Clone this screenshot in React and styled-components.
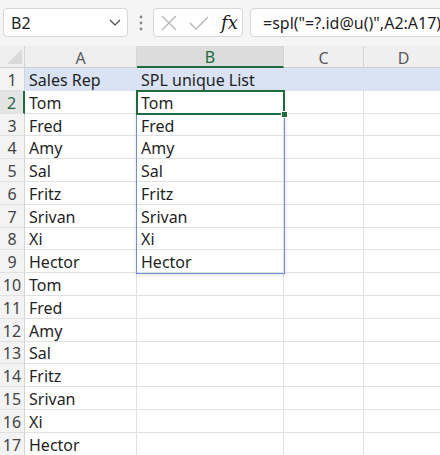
import React from 'react'
import styled, { createGlobalStyle } from 'styled-components'

const GlobalStyle = createGlobalStyle`
    html, body {
        margin: 0;
        padding: 0;
        background: #ffffff;
        overflow: hidden;
    }
    body {
        font-family: 'Noto Sans', 'Noto Sans CJK SC', sans-serif;
    }
`;

const ROW_H = 22.8;
const COLS = ['A', 'B', 'C', 'D'];
const colA = ['Sales Rep', 'Tom', 'Fred', 'Amy', 'Sal', 'Fritz', 'Srivan', 'Xi', 'Hector', 'Tom', 'Fred', 'Amy', 'Sal', 'Fritz', 'Srivan', 'Xi', 'Hector'];
const colB = ['SPL unique List', 'Tom', 'Fred', 'Amy', 'Sal', 'Fritz', 'Srivan', 'Xi', 'Hector'];

const Dots = () => (
    <DotsWrap>
        <svg width="4" height="16" viewBox="0 0 4 16">
            <circle cx="2" cy="2" r="1.4" fill="#8a8a8a" />
            <circle cx="2" cy="8" r="1.4" fill="#8a8a8a" />
            <circle cx="2" cy="14" r="1.4" fill="#8a8a8a" />
        </svg>
    </DotsWrap>
)

export default function App() {
    return (
        <>
            <GlobalStyle />
            <Page>
                <Toolbar>
                    <NameBox>
                        <NameText>B2</NameText>
                        <svg width="12" height="7" viewBox="0 0 12 7">
                            <path d="M1 1 L6 6 L11 1" fill="none" stroke="#444" strokeWidth="1.2" />
                        </svg>
                    </NameBox>
                    <Dots />
                    <FxBox>
                        <svg width="16" height="16" viewBox="0 0 16 16">
                            <path d="M1 1 L15 15 M15 1 L1 15" stroke="#b4b4b4" strokeWidth="1.3" fill="none" />
                        </svg>
                        <svg width="20" height="14" viewBox="0 0 20 14">
                            <path d="M1 7 L7 13 L19 1" stroke="#b4b4b4" strokeWidth="1.3" fill="none" />
                        </svg>
                        <FxText>fx</FxText>
                    </FxBox>
                    <FormulaBox>=spl("=?.id@u()",A2:A17)</FormulaBox>
                </Toolbar>

                <Sheet>
                    <Corner>
                        <svg width="15" height="15" viewBox="0 0 15 15">
                            <path d="M15 0 L15 15 L0 15 Z" fill="#dadada" />
                        </svg>
                    </Corner>
                    {COLS.map(c => (
                        <ColHead key={c} active={c === 'B'}>{c}</ColHead>
                    ))}

                    {colA.map((a, i) => (
                        <React.Fragment key={i}>
                            <RowHead active={i === 1}>{i + 1}</RowHead>
                            <Cell fill={i === 0}>{a}</Cell>
                            <Cell fill={i === 0}>{colB[i] || ''}</Cell>
                            <Cell fill={i === 0} />
                            <Cell fill={i === 0} />
                        </React.Fragment>
                    ))}

                    <SpillRange />
                    <ActiveCell>
                        <FillHandle />
                    </ActiveCell>
                </Sheet>
            </Page>
        </>
    )
}

const Page = styled.div`
    width: 440px;
    height: 455px;
    overflow: hidden;
    background: #ffffff;
`;
const Toolbar = styled.div`
    height: 46px;
    box-sizing: border-box;
    background: #f5f5f5;
    display: flex;
    align-items: center;
    padding: 0 0 1px 3px;
    overflow: hidden;
    white-space: nowrap;
`;
const NameBox = styled.div`
    flex: none;
    width: 125px;
    height: 29px;
    box-sizing: border-box;
    background: #ffffff;
    border: 1px solid #d6d6d6;
    border-radius: 4px;
    display: flex;
    align-items: center;
    justify-content: space-between;
    padding: 0 6px 0 7px;
`;
const NameText = styled.span`
    font-size: 16px;
    color: #1f1f1f;
`;
const DotsWrap = styled.div`
    flex: none;
    width: 25px;
    display: flex;
    justify-content: center;
    align-items: center;
`;
const FxBox = styled.div`
    flex: none;
    width: 90px;
    height: 29px;
    box-sizing: border-box;
    background: #ffffff;
    border: 1px solid #d6d6d6;
    border-radius: 4px;
    display: flex;
    align-items: center;
    gap: 12px;
    padding-left: 7px;
`;
const FxText = styled.span`
    font-family: 'DejaVu Serif', 'Liberation Serif', serif;
    font-style: italic;
    font-size: 18px;
    color: #1a1a1a;
    margin-left: 0;
`;
const FormulaBox = styled.div`
    flex: none;
    width: 240px;
    height: 29px;
    margin-left: 7px;
    box-sizing: border-box;
    background: #ffffff;
    border: 1px solid #d6d6d6;
    border-radius: 4px;
    display: flex;
    align-items: center;
    padding-left: 12px;
    font-size: 16px;
    color: #1f1f1f;
`;
const Sheet = styled.div`
    position: relative;
    display: grid;
    grid-template-columns: 25px 112px 147px 80px 80px;
    grid-template-rows: 22px repeat(17, ${ROW_H}px);
    font-size: 16px;
    color: #1f1f1f;
`;
const Corner = styled.div`
    background: #efefef;
    border-right: 1px solid #d4d4d4;
    border-bottom: 1px solid #cfcfcf;
    display: flex;
    align-items: flex-end;
    justify-content: flex-end;
    padding: 0 2px 3px 0;
    box-sizing: border-box;
`;
const ColHead = styled.div`
    box-sizing: border-box;
    background: ${({ active }) => active ? '#dcdcdc' : '#efefef'};
    color: ${({ active }) => active ? '#1e6b3f' : '#5a5a5a'};
    border-right: 1px solid #d4d4d4;
    border-bottom: ${({ active }) => active ? '2px solid #1e6b3f' : '1px solid #cfcfcf'};
    display: flex;
    align-items: center;
    justify-content: center;
    padding-top: 2px;
    font-size: 16px;
`;
const RowHead = styled.div`
    box-sizing: border-box;
    background: ${({ active }) => active ? '#e4e4e4' : '#f3f3f3'};
    color: ${({ active }) => active ? '#1e6b3f' : '#444444'};
    border-right: ${({ active }) => active ? '2px solid #1e6b3f' : '1px solid #d4d4d4'};
    border-bottom: 1px solid #e0e0e0;
    display: flex;
    align-items: center;
    justify-content: center;
    padding-top: 2px;
    font-size: 16px;
`;
const Cell = styled.div`
    box-sizing: border-box;
    background: ${({ fill }) => fill ? '#dae3f3' : '#ffffff'};
    border-right: 1px solid ${({ fill }) => fill ? '#dae3f3' : '#e1e1e1'};
    border-bottom: 1px solid ${({ fill }) => fill ? '#dae3f3' : '#e1e1e1'};
    display: flex;
    align-items: center;
    padding: 2px 0 0 4px;
    white-space: nowrap;
    overflow: hidden;
`;
const SpillRange = styled.div`
    position: absolute;
    left: 136px;
    top: ${22 + ROW_H}px;
    width: 149px;
    height: ${ROW_H * 8 + 1}px;
    box-sizing: border-box;
    border: 1px solid #6f8fd4;
    box-shadow: 0 1px 4px rgba(0, 0, 0, 0.12);
    pointer-events: none;
`;
const ActiveCell = styled.div`
    position: absolute;
    left: 136px;
    top: ${22 + ROW_H - 1}px;
    width: 149px;
    height: ${ROW_H + 2}px;
    box-sizing: border-box;
    border: 2px solid #1e6b3f;
    pointer-events: none;
`;
const FillHandle = styled.div`
    position: absolute;
    right: -5px;
    bottom: -5px;
    width: 7px;
    height: 7px;
    background: #1e6b3f;
    border: 1px solid #ffffff;
    box-sizing: border-box;
`;
